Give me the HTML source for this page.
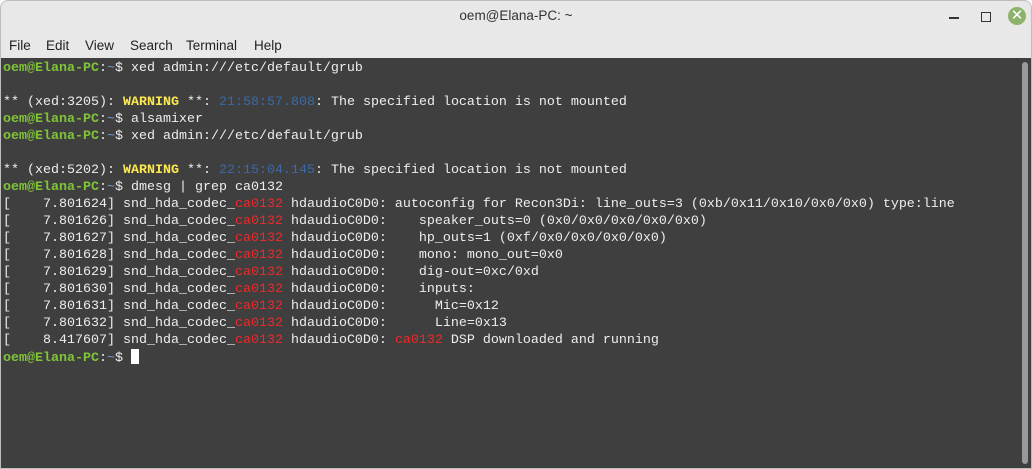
<!DOCTYPE html>
<html><head><style>
body{margin:0;width:1032px;height:469px;background:#fff;overflow:hidden;font-family:"Liberation Sans",sans-serif}
.win{position:absolute;left:0;top:0;width:1030px;height:467px;border:1px solid #bdbdbd;border-radius:8px 8px 0 0;background:#e8e8e8;overflow:hidden}
.title{position:absolute;top:7px;width:100%;text-align:center;font-size:13.5px;color:#333}
.menu span{position:absolute;top:37px;font-size:13.5px;color:#222}
.term{position:absolute;left:0;top:57px;width:1030px;height:410px;background:#3f3f3f}
pre{margin:0;padding:2px 0 0 2px;font-family:"Liberation Mono",monospace;font-size:13.33px;line-height:17px;color:#eeeeec}
.g{color:#80c438;font-weight:bold}.b{color:#729fcf}.y{color:#fce94f;font-weight:bold}.t{color:#3a6aa8}.r{color:#ef2929}
.cur{display:inline-block;width:8px;height:15px;background:#fff;vertical-align:-3px}
.sb{position:absolute;left:1021px;top:4px;width:6px;height:402px;background:#9a9a9a;border-radius:3px}
</style></head><body>
<div class="win">
<div class="title">oem@Elana-PC: ~</div>
<div style="position:absolute;left:948px;top:16px;width:10px;height:1.5px;background:#333"></div>
<div style="position:absolute;left:980px;top:11px;width:8px;height:8px;border:1.3px solid #333"></div>
<div style="position:absolute;left:1007px;top:6px;width:18px;height:18px;border-radius:50%;background:#8db36a;color:#fff;font-size:15px;line-height:18px;text-align:center">✕</div>
<div class="menu"><span style="left:8px">File</span><span style="left:45px">Edit</span><span style="left:84px">View</span><span style="left:129px">Search</span><span style="left:185px">Terminal</span><span style="left:253px">Help</span></div>
<div class="term"><pre><span class="g">oem@Elana-PC</span>:<span class="b">~</span>$ xed admin:///etc/default/grub

** (xed:3205): <span class="y">WARNING</span> **: <span class="t">21:58:57.808</span>: The specified location is not mounted
<span class="g">oem@Elana-PC</span>:<span class="b">~</span>$ alsamixer
<span class="g">oem@Elana-PC</span>:<span class="b">~</span>$ xed admin:///etc/default/grub

** (xed:5202): <span class="y">WARNING</span> **: <span class="t">22:15:04.145</span>: The specified location is not mounted
<span class="g">oem@Elana-PC</span>:<span class="b">~</span>$ dmesg | grep ca0132
[    7.801624] snd_hda_codec_<span class="r">ca0132</span> hdaudioC0D0: autoconfig for Recon3Di: line_outs=3 (0xb/0x11/0x10/0x0/0x0) type:line
[    7.801626] snd_hda_codec_<span class="r">ca0132</span> hdaudioC0D0:    speaker_outs=0 (0x0/0x0/0x0/0x0/0x0)
[    7.801627] snd_hda_codec_<span class="r">ca0132</span> hdaudioC0D0:    hp_outs=1 (0xf/0x0/0x0/0x0/0x0)
[    7.801628] snd_hda_codec_<span class="r">ca0132</span> hdaudioC0D0:    mono: mono_out=0x0
[    7.801629] snd_hda_codec_<span class="r">ca0132</span> hdaudioC0D0:    dig-out=0xc/0xd
[    7.801630] snd_hda_codec_<span class="r">ca0132</span> hdaudioC0D0:    inputs:
[    7.801631] snd_hda_codec_<span class="r">ca0132</span> hdaudioC0D0:      Mic=0x12
[    7.801632] snd_hda_codec_<span class="r">ca0132</span> hdaudioC0D0:      Line=0x13
[    8.417607] snd_hda_codec_<span class="r">ca0132</span> hdaudioC0D0: <span class="r">ca0132</span> DSP downloaded and running
<span class="g">oem@Elana-PC</span>:<span class="b">~</span>$ <span class="cur"></span></pre>
<div class="sb"></div></div>
</div>
</body></html>
